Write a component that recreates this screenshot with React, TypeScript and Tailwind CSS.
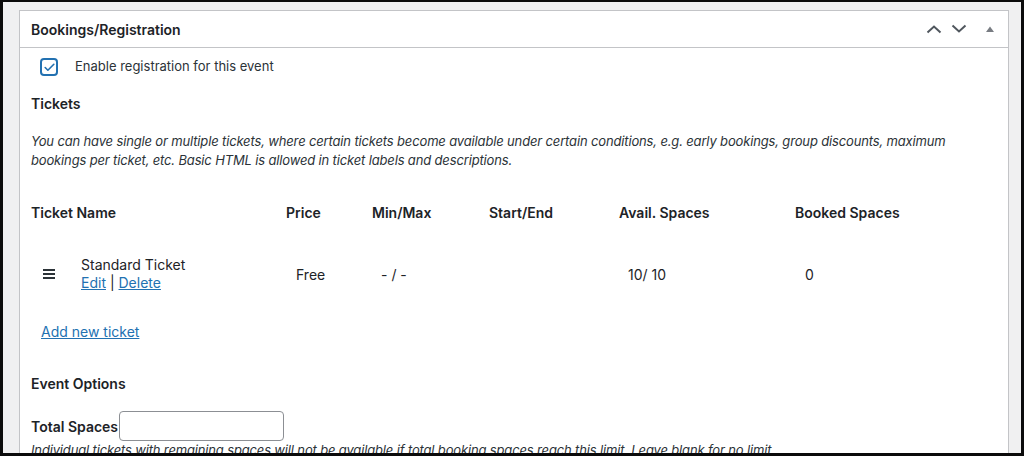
import { Check } from 'lucide-react';

const font = { fontFamily: 'Inter, "Noto Sans", sans-serif' };

function HeaderControls() {
  return (
    <div className="flex items-center">
      <button className="w-[24px] h-[24px] flex items-center justify-center text-[#50575e]">
        <svg width="16" height="10" viewBox="0 0 16 10" fill="none" stroke="currentColor" strokeWidth="2">
          <path d="M1.5 8.5 L8 2.5 L14.5 8.5" />
        </svg>
      </button>
      <button className="w-[24px] h-[24px] ml-[1px] flex items-center justify-center text-[#50575e]">
        <svg width="16" height="10" viewBox="0 0 16 10" fill="none" stroke="currentColor" strokeWidth="2">
          <path d="M1.5 1.5 L8 7.5 L14.5 1.5" />
        </svg>
      </button>
      <button className="w-[24px] h-[24px] ml-[7px] flex items-center justify-center text-[#787c82]">
        <svg width="10" height="8" viewBox="0 0 10 8" fill="currentColor">
          <path d="M1 7 L5 1.5 L9 7 Z" />
        </svg>
      </button>
    </div>
  );
}

function Hamburger() {
  return (
    <svg width="12" height="10" viewBox="0 0 12 10" fill="#2c3338">
      <rect x="0" y="0" width="12" height="2" />
      <rect x="0" y="4" width="12" height="2" />
      <rect x="0" y="8" width="12" height="2" />
    </svg>
  );
}

export default function App() {
  const cols = 'grid grid-cols-[255px_86px_117px_130px_176px_1fr]';
  return (
    <div className="w-[1024px] h-[456px] bg-[#0b0b0b] pl-[3px] pt-[2px] pr-[3px] pb-[3px] overflow-hidden" style={font}>
      <div className="w-full h-full bg-[#f0f0f1] pl-[16px] pt-[8px] pr-[12px] overflow-hidden">
        <div className="bg-white border border-[#c3c4c7] border-b-0 h-[460px] text-[#1d2327]">
          <div className="h-[37px] border-b border-[#c3c4c7] flex items-center justify-between pl-[11px] pr-[6px]">
            <h2 className="text-[14px] font-semibold">Bookings/Registration</h2>
            <HeaderControls />
          </div>

          <div className="pl-[11px] pr-[6px]">
            <div className="h-[38px] flex items-center">
              <span className="ml-[9px] w-[18px] h-[18px] rounded-[4px] border-2 border-[#2271b1] flex items-center justify-center">
                <Check className="w-[13px] h-[13px] text-[#2271b1]" strokeWidth={3} />
              </span>
              <span className="ml-[17px] text-[13px] text-[#2c3338]">Enable registration for this event</span>
            </div>

            <div className="h-[34px] flex items-center">
              <h4 className="text-[14px] font-semibold">Tickets</h4>
            </div>

            <p className="pt-[12px] text-[13px] italic leading-[19px] tracking-[-0.15px] text-[#2c3338]">
              You can have single or multiple tickets, where certain tickets become available under certain conditions, e.g. early bookings, group discounts, maximum bookings per ticket, etc. Basic HTML is allowed in ticket labels and descriptions.
            </p>

            <div className={`${cols} mt-[22px] h-[40px] items-center text-[14px] font-semibold`}>
              <div>Ticket Name</div>
              <div>Price</div>
              <div>Min/Max</div>
              <div>Start/End</div>
              <div>Avail. Spaces</div>
              <div>Booked Spaces</div>
            </div>

            <div className={`${cols} h-[84px] items-center text-[14px] text-[#1d2327]`}>
              <div className="flex items-center">
                <span className="ml-[12px] flex"><Hamburger /></span>
                <div className="ml-[26px] leading-[18px]">
                  <div>Standard Ticket</div>
                  <div>
                    <a href="#" className="text-[#2271b1] underline">Edit</a>
                    <span> | </span>
                    <a href="#" className="text-[#2271b1] underline">Delete</a>
                  </div>
                </div>
              </div>
              <div className="pl-[10px]">Free</div>
              <div className="pl-[9px]">- / -</div>
              <div></div>
              <div className="pl-[9px]">10/ 10</div>
              <div className="pl-[10px]">0</div>
            </div>

            <div className="h-[30px] flex items-center">
              <a href="#" className="ml-[10px] text-[14px] text-[#2271b1] underline">Add new ticket</a>
            </div>

            <div className="mt-[24px] h-[26px] flex items-center">
              <h4 className="text-[14px] font-semibold">Event Options</h4>
            </div>

            <div className="mt-[15px] h-[30px] flex items-center">
              <label className="text-[14px] font-semibold">Total Spaces</label>
              <input
                type="text"
                className="ml-[1px] w-[165px] h-[30px] rounded-[4px] border border-[#8c8f94] bg-white outline-none"
              />
            </div>

            <p className="text-[13px] italic leading-[19px] tracking-[-0.15px] text-[#2c3338] whitespace-nowrap">
              Individual tickets with remaining spaces will not be available if total booking spaces reach this limit. Leave blank for no limit.
            </p>
          </div>
        </div>
      </div>
    </div>
  );
}
